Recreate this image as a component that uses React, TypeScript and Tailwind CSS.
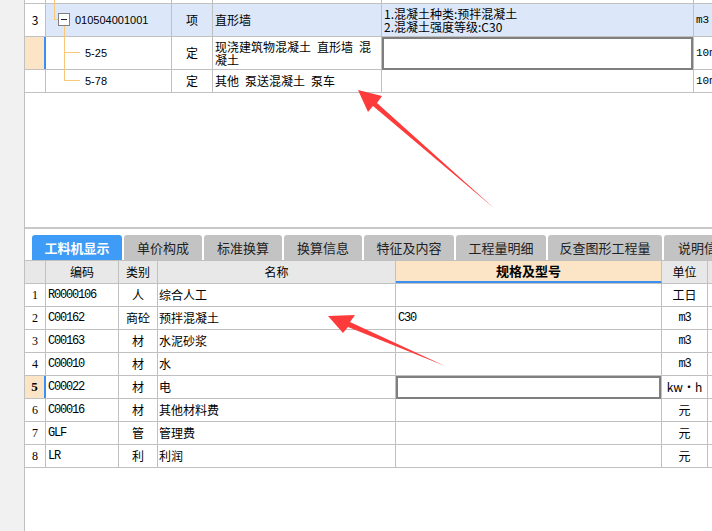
import React from 'react';

const line = 'border-[#c0c0c0]';
const orange = 'bg-[#f9c67a]';
const mono = "font-['Liberation_Mono',monospace] text-[12px] tracking-[-1.2px]";

interface Resource {
  no: number;
  code: string;
  kind: string;
  name: string;
  spec: string;
  unit: string;
}

const resources: Resource[] = [
  { no: 1, code: 'R0000106', kind: '人', name: '综合人工', spec: '', unit: '工日' },
  { no: 2, code: 'C00162', kind: '商砼', name: '预拌混凝土', spec: 'C30', unit: 'm3' },
  { no: 3, code: 'C00163', kind: '材', name: '水泥砂浆', spec: '', unit: 'm3' },
  { no: 4, code: 'C00010', kind: '材', name: '水', spec: '', unit: 'm3' },
  { no: 5, code: 'C00022', kind: '材', name: '电', spec: '', unit: 'kw・h' },
  { no: 6, code: 'C00016', kind: '材', name: '其他材料费', spec: '', unit: '元' },
  { no: 7, code: 'GLF', kind: '管', name: '管理费', spec: '', unit: '元' },
  { no: 8, code: 'LR', kind: '利', name: '利润', spec: '', unit: '元' },
];

const tabs = [
  { label: '工料机显示', w: 'w-[90px]' },
  { label: '单价构成', w: 'w-[78px]' },
  { label: '标准换算', w: 'w-[78px]' },
  { label: '换算信息', w: 'w-[78px]' },
  { label: '特征及内容', w: 'w-[90px]' },
  { label: '工程量明细', w: 'w-[90px]' },
  { label: '反查图形工程量', w: 'w-[114px]' },
  { label: '说明信息', w: 'w-[80px]' },
];

const SelectedBox = () => (
  <div className="absolute left-0 top-0 right-0 -bottom-[1px] border-2 border-[#7f7f7f] bg-white" />
);

const TopTable = () => (
  <div className="flex flex-col h-[227px]">
    {/* partial row above */}
    <div className={`flex h-[4px] border-b ${line}`}>
      <div className={`w-[21px] shrink-0 border-r ${line}`} />
      <div className={`relative w-[126px] shrink-0 border-r ${line}`}>
        <span className={`absolute left-[8px] top-0 w-[1px] h-[4px] ${orange}`} />
      </div>
      <div className={`w-[41px] shrink-0 border-r ${line}`} />
      <div className={`w-[169px] shrink-0 border-r ${line}`} />
      <div className={`w-[312px] shrink-0 border-r ${line}`} />
      <div className="flex-1" />
    </div>

    {/* row 3 */}
    <div className={`flex h-[33px] border-b ${line}`}>
      <div className={`w-[21px] shrink-0 border-r ${line} bg-white flex items-center justify-center`}>3</div>
      <div className={`relative w-[126px] shrink-0 border-r ${line} bg-[#dce8fa] flex items-center`}>
        <span className={`absolute left-[8px] top-0 w-[1px] h-[16px] ${orange}`} />
        <span className={`absolute left-[8px] top-[15px] w-[4px] h-[1px] ${orange}`} />
        <span className="absolute left-[12px] top-[9px] w-[12px] h-[13px] border border-[#808080] bg-white flex items-center justify-center">
          <span className="w-[6px] h-[1px] bg-[#222]" />
        </span>
        <span className={`absolute left-[18px] top-[22px] w-[1px] h-[11px] ${orange}`} />
        <span className="pl-[29px] font-['Liberation_Sans',sans-serif] text-[11px]">010504001001</span>
      </div>
      <div className={`w-[41px] shrink-0 border-r ${line} bg-[#dce8fa] flex items-center justify-center`}>项</div>
      <div className={`w-[169px] shrink-0 border-r ${line} bg-[#dce8fa] flex items-center pl-[2px]`}>直形墙</div>
      <div className={`w-[312px] shrink-0 border-r ${line} bg-[#dce8fa] flex items-center pl-[2px] pb-[1px] leading-[13px]`}>
        <div>
          1.混凝土种类:预拌混凝土
          <br />
          2.混凝土强度等级:C30
        </div>
      </div>
      <div className="flex-1 bg-[#dce8fa] flex items-center pl-[2px] font-['Liberation_Mono',monospace] text-[11px] whitespace-nowrap">m3</div>
    </div>

    {/* row 5-25 */}
    <div className={`flex h-[33px] border-b ${line}`}>
      <div className="w-[21px] shrink-0 border-r-2 border-[#3b8ff0] bg-[#fce5c7]" />
      <div className={`relative w-[126px] shrink-0 border-r ${line} flex items-center`}>
        <span className={`absolute left-[18px] top-0 w-[1px] h-[33px] ${orange}`} />
        <span className={`absolute left-[18px] top-[15px] w-[16px] h-[1px] ${orange}`} />
        <span className="pl-[39px] font-['Liberation_Sans',sans-serif] text-[11px]">5-25</span>
      </div>
      <div className={`w-[41px] shrink-0 border-r ${line} flex items-center justify-center`}>定</div>
      <div className={`w-[169px] shrink-0 border-r ${line} flex items-center pl-[2px] leading-[13px]`}>
        <div className="whitespace-nowrap">
          现浇建筑物混凝土{'\u2002'}直形墙{'\u2002'}混
          <br />
          凝土
        </div>
      </div>
      <div className={`relative w-[312px] shrink-0 border-r ${line}`}>
        <SelectedBox />
      </div>
      <div className="flex-1 flex items-center pl-[2px] font-['Liberation_Mono',monospace] text-[11px] whitespace-nowrap">10m3</div>
    </div>

    {/* row 5-78 */}
    <div className={`flex h-[23px] border-b ${line}`}>
      <div className={`w-[21px] shrink-0 border-r ${line}`} />
      <div className={`relative w-[126px] shrink-0 border-r ${line} flex items-center`}>
        <span className={`absolute left-[18px] top-0 w-[1px] h-[11px] ${orange}`} />
        <span className={`absolute left-[18px] top-[10px] w-[16px] h-[1px] ${orange}`} />
        <span className="pl-[39px] font-['Liberation_Sans',sans-serif] text-[11px]">5-78</span>
      </div>
      <div className={`w-[41px] shrink-0 border-r ${line} flex items-center justify-center`}>定</div>
      <div className={`w-[169px] shrink-0 border-r ${line} flex items-center pl-[2px] whitespace-nowrap`}>
        其他{'\u2002'}泵送混凝土{'\u2002'}泵车
      </div>
      <div className={`w-[312px] shrink-0 border-r ${line}`} />
      <div className="flex-1 flex items-center pl-[2px] font-['Liberation_Mono',monospace] text-[11px] whitespace-nowrap">10m3</div>
    </div>
    <div className="flex-1 bg-white" />
  </div>
);

const TabBar = () => (
  <div className="flex gap-[2px] pl-[7px] mt-[6px] h-[25px] overflow-hidden">
    {tabs.map((t, i) => (
      <div
        key={t.label}
        className={`${t.w} shrink-0 rounded-t-[3px] flex items-center justify-center whitespace-nowrap text-[13px] ${
          i === 0 ? 'bg-[#3e9cf6] text-white font-bold' : 'bg-[#c3c3c3] text-[#222]'
        }`}
      >
        {t.label}
      </div>
    ))}
  </div>
);

const ResourceTable = () => (
  <div className={`flex flex-col border-t ${line}`}>
    <div className={`flex h-[23px] border-b ${line} bg-[#e8e8e8]`}>
      <div className={`w-[21px] shrink-0 border-r ${line}`} />
      <div className={`w-[73px] shrink-0 border-r ${line} flex items-center justify-center`}>编码</div>
      <div className={`w-[39px] shrink-0 border-r ${line} flex items-center justify-center`}>类别</div>
      <div className={`w-[238px] shrink-0 border-r ${line} flex items-center justify-center`}>名称</div>
      <div className={`w-[266px] shrink-0 border-r ${line} bg-[#fce5c7] border-b-2 border-b-[#3b8ff0] flex items-center justify-center font-bold text-[13px]`}>
        规格及型号
      </div>
      <div className={`w-[46px] shrink-0 border-r ${line} flex items-center justify-center`}>单位</div>
      <div className="flex-1" />
    </div>
    {resources.map((r) => {
      const active = r.no === 5;
      return (
        <div key={r.no} className={`flex h-[23px] border-b ${line}`}>
          <div
            className={`w-[21px] shrink-0 flex items-center justify-center font-['Liberation_Serif',serif] text-[12px] ${
              active ? 'bg-[#fce5c7] border-r-2 border-[#3b8ff0] font-bold text-[13px]' : `border-r ${line}`
            }`}
          >
            {r.no}
          </div>
          <div className={`w-[73px] shrink-0 border-r ${line} flex items-center pl-[2px] ${mono}`}>{r.code}</div>
          <div className={`w-[39px] shrink-0 border-r ${line} flex items-center justify-center`}>{r.kind}</div>
          <div className={`w-[238px] shrink-0 border-r ${line} flex items-center pl-[1px]`}>{r.name}</div>
          <div className={`relative w-[266px] shrink-0 border-r ${line} flex items-center pl-[2px] ${mono}`}>
            {active ? <SelectedBox /> : r.spec}
          </div>
          <div className={`w-[46px] shrink-0 border-r ${line} flex items-center justify-center whitespace-nowrap`}>
            {r.unit === 'm3' ? <span className={mono}>m3</span> : r.unit}
          </div>
          <div className="flex-1" />
        </div>
      );
    })}
  </div>
);

const Arrows = () => (
  <svg className="absolute inset-0 pointer-events-none" width={712} height={531}>
    <polygon points="358,90 382,96 377,103 495,209 373,106 368,112" fill="#fe3b3b" />
    <polygon points="328,316 355,315 350,322 445,366 348,327 343,333" fill="#fe3b3b" />
  </svg>
);

export default function App() {
  return (
    <div className="relative flex w-[712px] h-[531px] overflow-hidden bg-white text-[12px] text-black font-['Noto_Sans_CJK_SC','Noto_Sans',sans-serif]">
      <div className="w-[24px] shrink-0 bg-[#f1f1f1]" />
      <div className={`flex flex-col flex-1 min-w-0 border-l ${line}`}>
        <TopTable />
        <div className="h-[2px] bg-[#c8c8c8]" />
        <TabBar />
        <ResourceTable />
        <div className="flex-1 bg-white" />
      </div>
      <Arrows />
    </div>
  );
}
